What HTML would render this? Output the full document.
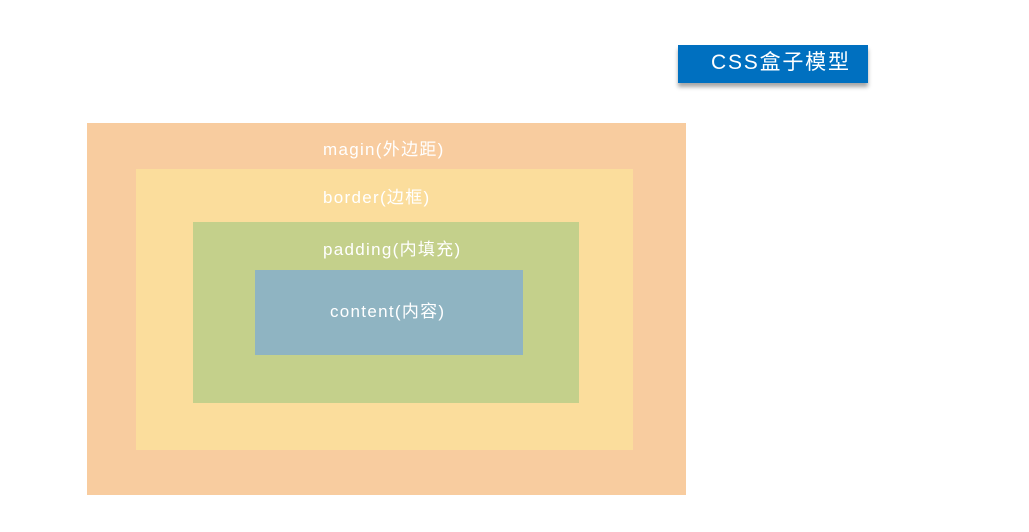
<!DOCTYPE html>
<html><head><meta charset="utf-8"><style>
body{margin:0;width:1029px;height:532px;background:#fff;position:relative;overflow:hidden;font-family:"Liberation Sans","Noto Sans CJK SC",sans-serif}
div{position:absolute}
.t{color:#fff;font-size:17px;line-height:20px;white-space:nowrap;letter-spacing:1.3px}
</style></head><body>
<div style="left:678px;top:45px;width:190px;height:38px;background:#0070c0;box-shadow:0 4px 4px rgba(0,0,0,0.35)"></div>
<div class="t" style="left:711px;top:51px;font-size:21px;line-height:24px;letter-spacing:1.8px">CSS盒子模型</div>
<div style="left:87px;top:123px;width:599px;height:372px;background:#f8cc9f"></div>
<div style="left:136px;top:169px;width:497px;height:281px;background:#fbdd9c"></div>
<div style="left:193px;top:222px;width:386px;height:181px;background:#c4d08b"></div>
<div style="left:255px;top:270px;width:268px;height:85px;background:#8fb4c2"></div>
<div class="t" style="left:323px;top:140px">magin(外边距)</div>
<div class="t" style="left:323px;top:188px">border(边框)</div>
<div class="t" style="left:323px;top:240px">padding(内填充)</div>
<div class="t" style="left:330px;top:302px">content(内容)</div>
</body></html>
